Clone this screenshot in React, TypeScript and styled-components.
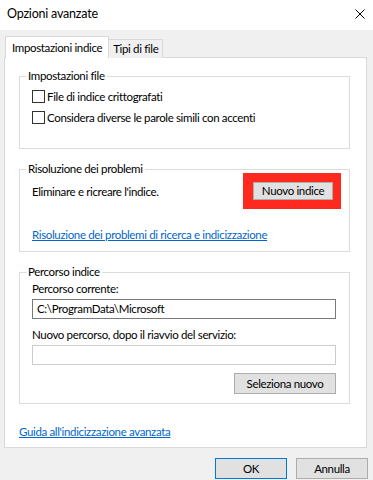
import React from "react";
import styled, { createGlobalStyle } from "styled-components";

const GlobalStyle = createGlobalStyle`
  body {
    margin: 0;
    background: #f0f0f0;
    font-family: Lato, "Noto Sans", sans-serif;
    font-size: 11.5px;
    letter-spacing: -0.35px;
    color: #000;
  }
`;

const Window = styled.div`
  width: 373px;
  height: 480px;
  background: #f0f0f0;
  display: flex;
  flex-direction: column;
  overflow: hidden;
`;

const TitleBar = styled.div`
  height: 30px;
  background: #fff;
  display: flex;
  align-items: center;
  justify-content: space-between;
  padding: 0 8px 2px 7px;
  box-sizing: border-box;
`;

const TitleText = styled.div`
  font-size: 12.5px;
  letter-spacing: -0.2px;
  line-height: 16px;
`;

const Body = styled.div`
  padding: 6px 6px 0 4px;
  display: flex;
  flex-direction: column;
`;

const TabStrip = styled.div`
  display: flex;
  align-items: flex-end;
  padding-left: 1px;
  margin-bottom: -1px;
`;

const Tab = styled.div<{ $active?: boolean }>`
  position: relative;
  z-index: ${(p) => (p.$active ? 1 : 0)};
  height: ${(p) => (p.$active ? "21px" : "18px")};
  padding: 0 ${(p) => (p.$active ? "6px" : "4px")};
  margin-left: ${(p) => (p.$active ? "0" : "-1px")};
  background: ${(p) => (p.$active ? "#fff" : "#f0f0f0")};
  border: 1px solid #d9d9d9;
  border-bottom: none;
  display: flex;
  align-items: center;
  line-height: 16px;
`;

const Panel = styled.div`
  background: #fff;
  border: 1px solid #d9d9d9;
  height: 391px;
  box-sizing: border-box;
  padding: 10px 16px 0 14px;
  display: flex;
  flex-direction: column;
  gap: 12px;
`;

const Group = styled.fieldset`
  margin: 0;
  padding: 0;
  min-width: 0;
  border: 1px solid #dcdcdc;
`;

const Legend = styled.legend`
  margin-left: 6px;
  padding: 0 2px;
  line-height: 16px;
`;

const GroupBody = styled.div<{ $pt: number; $pb: number }>`
  padding: ${(p) => p.$pt}px 13px ${(p) => p.$pb}px 12px;
  display: flex;
  flex-direction: column;
`;

const CheckRow = styled.label`
  height: 21px;
  display: flex;
  align-items: center;
  gap: 2px;
  line-height: 16px;
`;

const CheckBox = styled.span`
  width: 13px;
  height: 13px;
  box-sizing: border-box;
  border: 1px solid #333;
  background: #fff;
  flex: none;
`;

const ActionRow = styled.div`
  margin-top: -4px;
  margin-right: -5px;
  display: flex;
  align-items: center;
  justify-content: space-between;
`;

const Highlight = styled.div`
  background: #ff2a1f;
  padding: 9px 8px 9px 10px;
  display: flex;
`;

const Button = styled.button<{ $w?: number; $tall?: boolean; $default?: boolean }>`
  width: ${(p) => p.$w ?? 72}px;
  height: ${(p) => (p.$tall ? 21 : 18)}px;
  box-sizing: border-box;
  background: #e1e1e1;
  border: 1px solid ${(p) => (p.$default ? "#0078d7" : "#adadad")};
  font-family: inherit;
  font-size: inherit;
  letter-spacing: inherit;
  line-height: 16px;
  color: #000;
  padding: 0;
`;

const Link = styled.a<{ $mt?: number }>`
  color: #0066cc;
  text-decoration: underline;
  line-height: 16px;
  margin-top: ${(p) => p.$mt ?? 0}px;
  align-self: flex-start;
  cursor: pointer;
`;

const FieldLabel = styled.div<{ $mt?: number }>`
  line-height: 16px;
  margin-top: ${(p) => p.$mt ?? 0}px;
`;

const PathInput = styled.div<{ $disabled?: boolean }>`
  height: 20px;
  margin-top: 2px;
  box-sizing: border-box;
  border: 1px solid ${(p) => (p.$disabled ? "#cccccc" : "#7a7a7a")};
  background: #fff;
  padding: 0 4px;
  display: flex;
  align-items: center;
  line-height: 16px;
`;

const RightRow = styled.div`
  display: flex;
  justify-content: flex-end;
  margin-top: 8px;
`;

const Footer = styled.div`
  display: flex;
  justify-content: flex-end;
  gap: 9px;
  padding-top: 10px;
  margin-right: -1px;
`;

const CloseIcon = () => (
  <svg width="10" height="10" viewBox="0 0 10 10">
    <path d="M0.5 0.5 L9.5 9.5 M9.5 0.5 L0.5 9.5" stroke="#000" strokeWidth="1" fill="none" />
  </svg>
);

export default function App() {
  return (
    <>
      <GlobalStyle />
      <Window>
        <TitleBar>
          <TitleText>Opzioni avanzate</TitleText>
          <CloseIcon />
        </TitleBar>
        <Body>
          <TabStrip>
            <Tab $active>Impostazioni indice</Tab>
            <Tab>Tipi di file</Tab>
          </TabStrip>
          <Panel>
            <Group>
              <Legend>Impostazioni file</Legend>
              <GroupBody $pt={2} $pb={20}>
                <CheckRow>
                  <CheckBox />
                  File di indice crittografati
                </CheckRow>
                <CheckRow>
                  <CheckBox />
                  Considera diverse le parole simili con accenti
                </CheckRow>
              </GroupBody>
            </Group>
            <Group>
              <Legend>Risoluzione dei problemi</Legend>
              <GroupBody $pt={0} $pb={8}>
                <ActionRow>
                  <span>Eliminare e ricreare l'indice.</span>
                  <Highlight>
                    <Button $w={80}>Nuovo indice</Button>
                  </Highlight>
                </ActionRow>
                <Link $mt={18}>Risoluzione dei problemi di ricerca e indicizzazione</Link>
              </GroupBody>
            </Group>
            <Group>
              <Legend>Percorso indice</Legend>
              <GroupBody $pt={1} $pb={9}>
                <FieldLabel>Percorso corrente:</FieldLabel>
                <PathInput>C:\ProgramData\Microsoft</PathInput>
                <FieldLabel $mt={8}>Nuovo percorso, dopo il riavvio del servizio:</FieldLabel>
                <PathInput $disabled />
                <RightRow>
                  <Button $w={102} $tall>Seleziona nuovo</Button>
                </RightRow>
              </GroupBody>
            </Group>
            <Link $mt={8}>Guida all'indicizzazione avanzata</Link>
          </Panel>
          <Footer>
            <Button $tall $default>OK</Button>
            <Button $tall>Annulla</Button>
          </Footer>
        </Body>
      </Window>
    </>
  );
}
